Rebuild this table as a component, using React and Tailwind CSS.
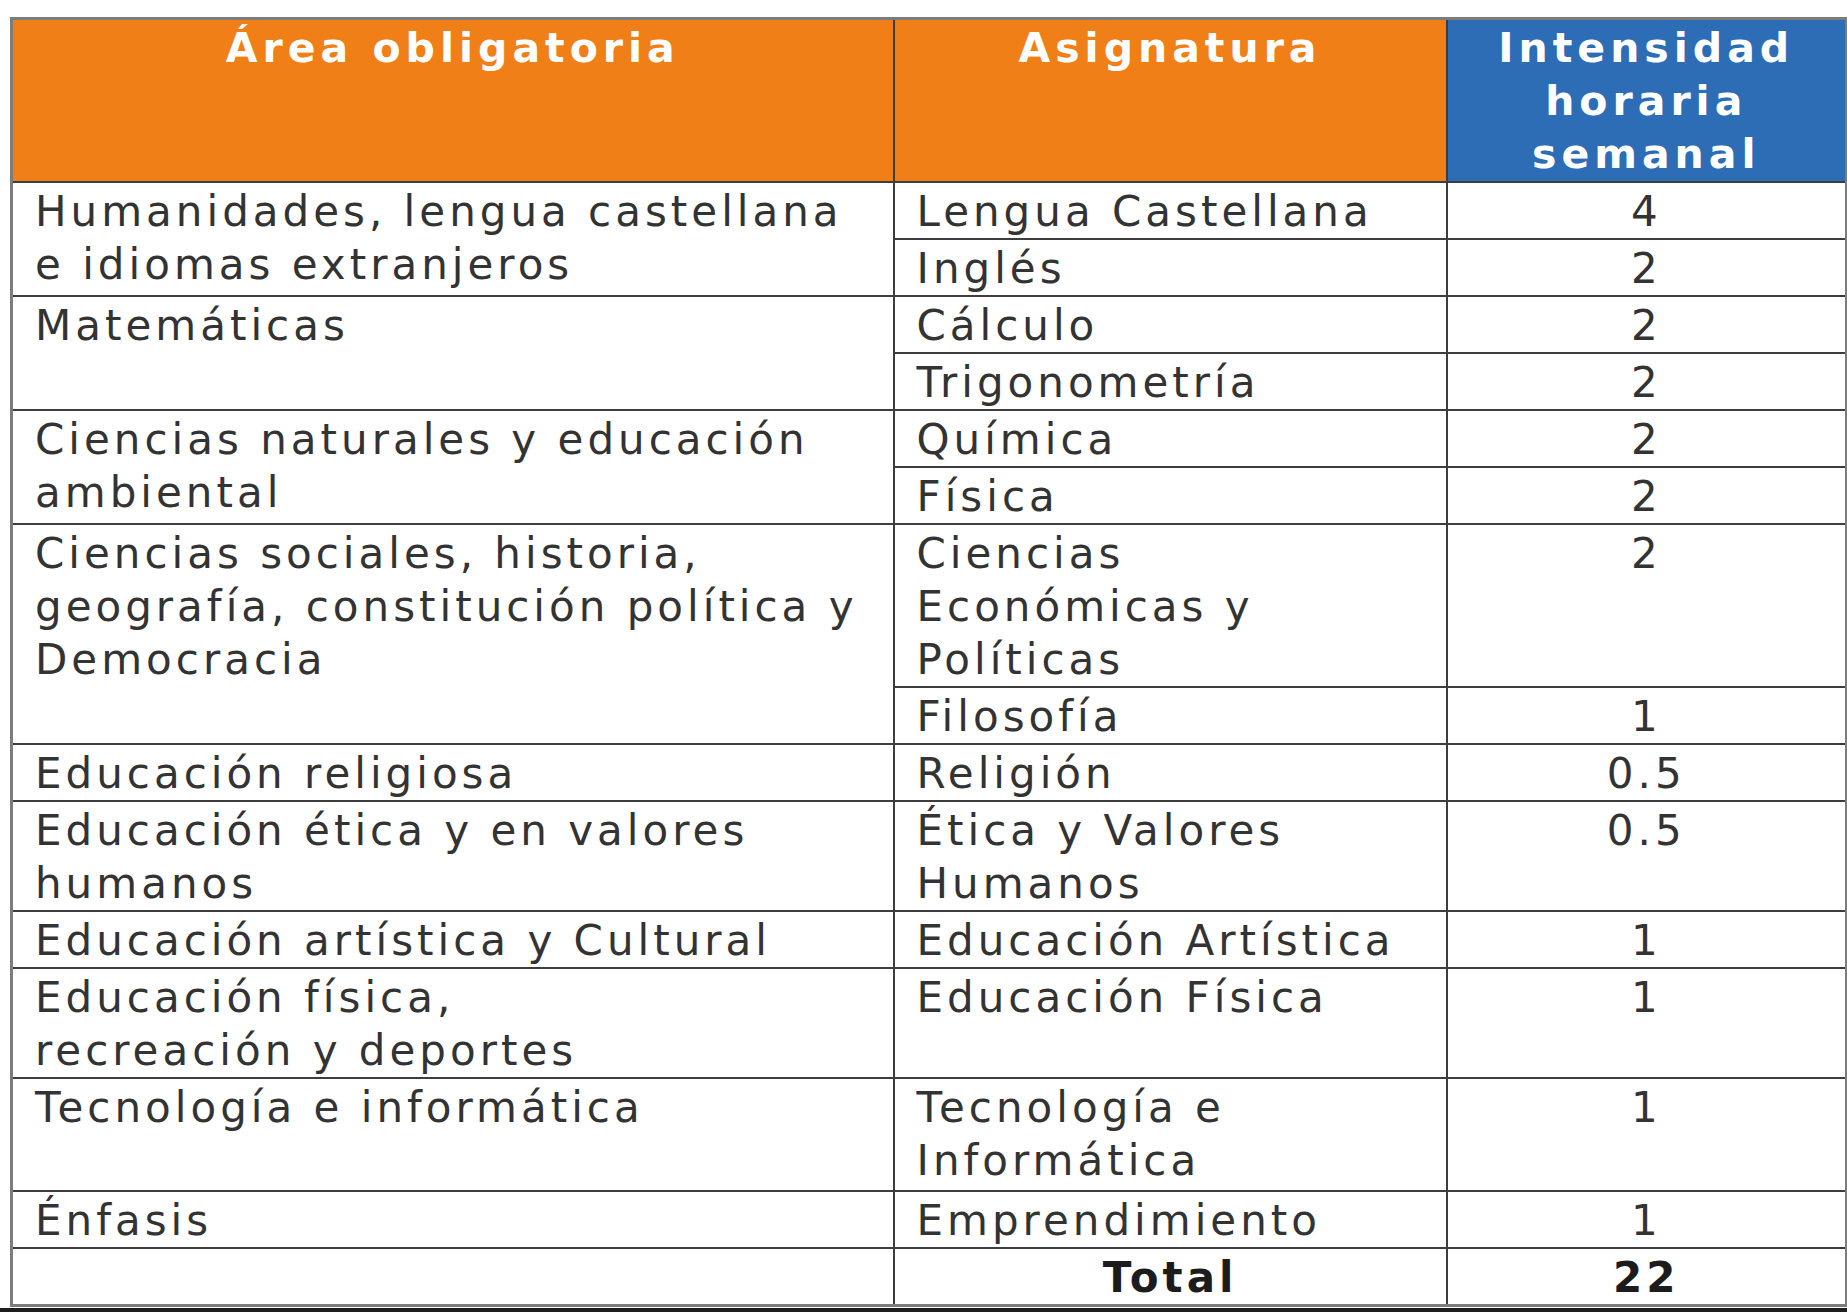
import React from 'react'

// Plan de estudios: área / asignatura / intensidad horaria
const rows = [
  { area: ['Humanidades, lengua castellana', 'e idiomas extranjeros'], span: 2, subject: ['Lengua Castellana'], hours: '4' },
  { subject: ['Inglés'], hours: '2' },
  { area: ['Matemáticas'], span: 2, subject: ['Cálculo'], hours: '2' },
  { subject: ['Trigonometría'], hours: '2' },
  { area: ['Ciencias naturales y educación', 'ambiental'], span: 2, subject: ['Química'], hours: '2' },
  { subject: ['Física'], hours: '2' },
  { area: ['Ciencias sociales, historia,', 'geografía, constitución política y', 'Democracia'], span: 2, subject: ['Ciencias', 'Económicas y', 'Políticas'], hours: '2' },
  { subject: ['Filosofía'], hours: '1' },
  { area: ['Educación religiosa'], subject: ['Religión'], hours: '0.5' },
  { area: ['Educación ética y en valores', 'humanos'], subject: ['Ética y Valores', 'Humanos'], hours: '0.5' },
  { area: ['Educación artística y Cultural'], subject: ['Educación Artística'], hours: '1' },
  { area: ['Educación física,', 'recreación y deportes'], subject: ['Educación Física'], hours: '1' },
  { area: ['Tecnología e informática'], subject: ['Tecnología e', 'Informática'], hours: '1', tall: true },
  { area: ['Énfasis'], subject: ['Emprendimiento'], hours: '1' },
]

function Lines({ items }) {
  return items.map((t, i) => (
    <React.Fragment key={i}>
      {i > 0 && <br />}
      {t}
    </React.Fragment>
  ))
}

const cell = 'border-2 border-[#3d3d3d] align-top pt-[2px] whitespace-nowrap'
const head = 'border-2 border-[#3d3d3d] align-top pt-[2px] text-center text-white font-bold text-[41px] leading-[53px] tracking-[5px]'

export default function App() {
  return (
    <div
      className="min-h-[1312px] flex flex-col bg-white text-[#333] text-[42px] leading-[53px] tracking-[4px]"
      style={{ fontFamily: '"DejaVu Sans", Verdana, sans-serif' }}
    >
      <div className="pl-[10px] pt-[17px]">
        <table className="table-fixed border-collapse border-[3px] border-[#7c7c7c] w-[1835px]">
          <colgroup>
            <col className="w-[882px]" />
            <col className="w-[553px]" />
            <col className="w-[400px]" />
          </colgroup>
          <thead>
            <tr>
              <th className={head + ' bg-[#ef7f16]'}>Área obligatoria</th>
              <th className={head + ' bg-[#ef7f16]'}>Asignatura</th>
              <th className={head + ' bg-[#2d6db6]'}>
                Intensidad<br />horaria<br />semanal
              </th>
            </tr>
          </thead>
          <tbody>
            {rows.map((r, i) => (
              <tr key={i} className={r.tall ? 'h-[113px]' : ''}>
                {r.area && (
                  <td rowSpan={r.span || 1} className={cell + ' pl-[22px]'}>
                    <Lines items={r.area} />
                  </td>
                )}
                <td className={cell + ' pl-[22px]'}>
                  <Lines items={r.subject} />
                </td>
                <td className={cell + ' text-center'}>{r.hours}</td>
              </tr>
            ))}
            <tr>
              <td className={cell}></td>
              <td className={cell + ' text-center font-bold text-[#1c1c1c]'}>Total</td>
              <td className={cell + ' text-center font-bold text-[#1c1c1c]'}>22</td>
            </tr>
          </tbody>
        </table>
      </div>
      <div className="mt-auto h-[4px] bg-[#1e1e1e]" />
    </div>
  )
}
